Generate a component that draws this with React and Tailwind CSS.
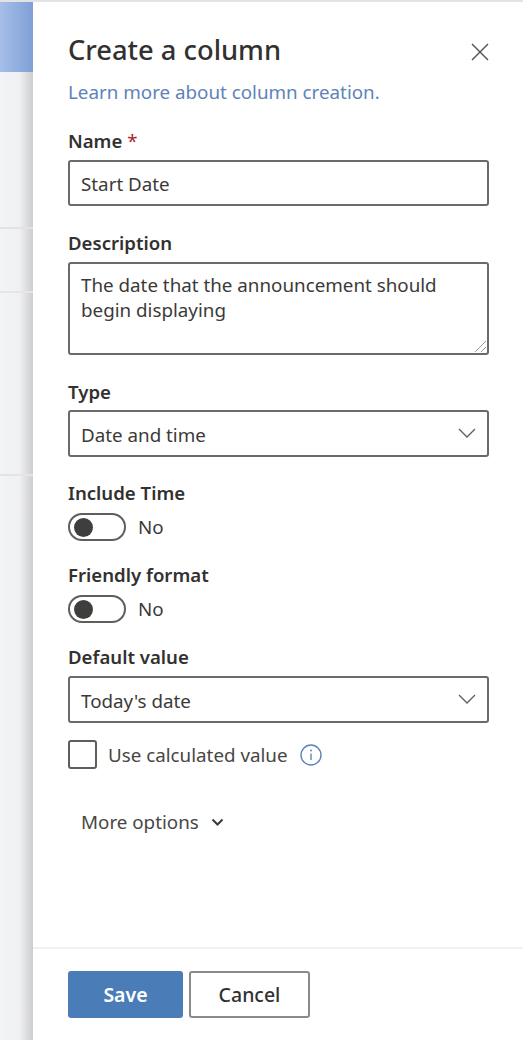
import React from "react";

const Label = ({ children, className = "" }) => (
  <div className={`text-[18.6px] leading-[28px] font-semibold text-[#323130] ${className}`}>
    {children}
  </div>
);

const Chevron = () => (
  <svg width="18" height="10" viewBox="0 0 18 10" fill="none" className="shrink-0 -mt-[1px]">
    <path d="M1 1l8 8 8-8" stroke="#605e5c" strokeWidth="1.3" />
  </svg>
);

const Select = ({ value }) => (
  <div className="h-[47px] flex items-center justify-between pl-[11px] pr-[11px] border-2 border-[#6b6a69] rounded-[3px] text-[18.8px] text-[#3b3a39]">
    <span className="pt-[3px]">{value}</span>
    <Chevron />
  </div>
);

const Toggle = () => (
  <div className="flex items-center gap-[12px] h-[28px]">
    <div className="w-[58px] h-[28px] rounded-full border-2 border-[#605e5c] flex items-center pl-[4px]">
      <div className="w-[19px] h-[19px] rounded-full bg-[#3f3e3d]" />
    </div>
    <span className="text-[18.8px] text-[#3b3a39]">No</span>
  </div>
);

export default function App() {
  return (
    <div className="w-[523px] h-[1040px] flex flex-col bg-white overflow-hidden font-['Noto_Sans','Open_Sans',sans-serif]">
      <div className="h-[2px] bg-[#e3e3e3] shrink-0" />
      <div className="flex flex-1 min-h-0">
        {/* page behind the panel */}
        <div className="w-[33px] shrink-0 flex flex-col">
          <div className="h-[70px] bg-gradient-to-r from-[#a5bfe8] to-[#7f9fd6]" />
          <div className="flex-1 flex flex-col bg-gradient-to-r from-[#f3f4f7] via-[#eff0f2] via-60% to-[#cdcdcd]">
            <div className="h-[157px] border-b-2 border-[#e2e2e3]" />
            <div className="h-[64px] border-b-2 border-[#e6e6e7]" />
            <div className="h-[183px] border-b-2 border-[#e4e4e5]" />
          </div>
        </div>

        {/* panel */}
        <div className="flex-1 flex flex-col min-w-0">
          <div className="flex-1 pl-[35px] pr-[34px]">
            <div className="flex items-center justify-between pt-[26px] h-[69px]">
              <h1 className="text-[27.3px] leading-[38px] font-medium text-[#323130]">Create a column</h1>
              <svg width="20" height="20" viewBox="0 0 20 20" fill="none" className="-mr-[1px] mt-[4px]">
                <path d="M2 2l16 16M18 2L2 18" stroke="#4f4e4d" strokeWidth="1.4" />
              </svg>
            </div>
            <a className="block mt-[8px] text-[18.8px] leading-[27px] text-[#5d83b9]">Learn more about column creation.</a>

            <Label className="mt-[21px]">
              Name <span className="text-[#a4262c] font-normal">*</span>
            </Label>
            <div className="mt-[5px] h-[46px] flex items-center px-[11px] pt-[3px] border-2 border-[#6b6a69] rounded-[3px] text-[18.8px] text-[#3b3a39]">
              Start Date
            </div>

            <Label className="mt-[23px]">Description</Label>
            <div className="relative mt-[5px] h-[93px] px-[11px] pt-[9px] border-2 border-[#6b6a69] rounded-[3px] text-[18.8px] leading-[25px] text-[#3b3a39]">
              The date that the announcement should begin displaying
              <svg width="13" height="13" viewBox="0 0 13 13" fill="none" className="absolute right-[0px] bottom-[0px]">
                <path d="M1 12L12 1M7 12l5-5" stroke="#9a9a9a" strokeWidth="1" />
              </svg>
            </div>

            <Label className="mt-[23px]">Type</Label>
            <div className="mt-[4px]">
              <Select value="Date and time" />
            </div>

            <Label className="mt-[22px]">Include Time</Label>
            <div className="mt-[6px]">
              <Toggle />
            </div>

            <Label className="mt-[20px]">Friendly format</Label>
            <div className="mt-[6px]">
              <Toggle />
            </div>

            <Label className="mt-[20px]">Default value</Label>
            <div className="mt-[5px]">
              <Select value="Today's date" />
            </div>

            <div className="mt-[17px] flex items-center h-[29px]">
              <div className="w-[29px] h-[29px] border-2 border-[#605e5c] rounded-[3px] shrink-0" />
              <span className="ml-[11px] pt-[2px] text-[18.8px] text-[#484644]">Use calculated value</span>
              <svg width="22" height="22" viewBox="0 0 22 22" fill="none" className="ml-[12px]">
                <circle cx="11" cy="11" r="10" stroke="#5d83b9" strokeWidth="1.4" />
                <path d="M11 9.5v6.5" stroke="#5d83b9" strokeWidth="1.4" />
                <circle cx="11" cy="6.5" r="1" fill="#5d83b9" />
              </svg>
            </div>

            <div className="mt-[39px] ml-[13px] flex items-center gap-[12px] text-[18.8px] leading-[28px] text-[#484644]">
              More options
              <svg width="13" height="9" viewBox="0 0 13 9" fill="none">
                <path d="M1.5 1.5l5 5 5-5" stroke="#3b3a39" strokeWidth="2" />
              </svg>
            </div>
          </div>

          <div className="h-[93px] shrink-0 border-t-2 border-[#f1f1f1] pl-[35px] pt-[22px] flex items-start gap-[6px]">
            <button className="w-[115px] h-[47px] bg-[#4a7db8] rounded-[3px] text-white text-[19.5px] font-semibold">
              Save
            </button>
            <button className="w-[121px] h-[47px] bg-white border-2 border-[#8a8a8a] rounded-[3px] text-[#323130] text-[19.5px] font-medium">
              Cancel
            </button>
          </div>
        </div>
      </div>
    </div>
  );
}
